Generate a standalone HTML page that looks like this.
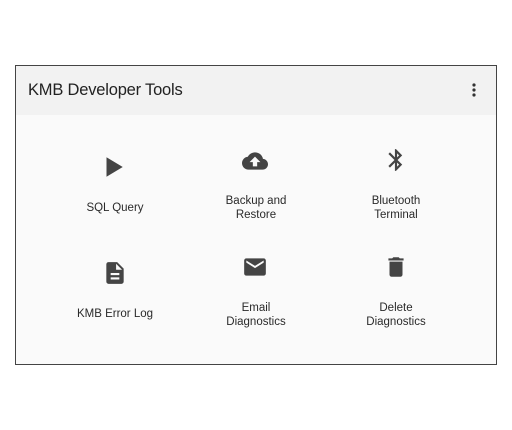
<!DOCTYPE html>
<html><head><style>
body{margin:0;background:#fff;width:512px;height:430px;position:relative;font-family:"Liberation Sans",sans-serif;}
.frame{position:absolute;left:15px;top:65px;width:480px;height:298px;border:1px solid #444;background:#fafafa;}
.hdr{position:absolute;left:0;top:0;width:480px;height:49px;background:#f2f2f2;}
.title{position:absolute;left:12px;top:15px;font-size:16.5px;color:#222;letter-spacing:-0.2px;}
.dots{position:absolute;left:455px;top:17px;}
.ic{position:absolute;width:26px;height:26px;}
.ic svg{width:26px;height:26px;fill:#444;}
.lb{position:absolute;width:120px;text-align:center;font-size:11.5px;line-height:14px;color:#2a2a2a;}
</style></head><body>
<div class="frame">
<div class="hdr"><div class="title">KMB Developer Tools</div>
<svg class="dots" width="6" height="14" viewBox="0 0 6 14"><circle cx="3" cy="2" r="1.6" fill="#333"/><circle cx="3" cy="7" r="1.6" fill="#333"/><circle cx="3" cy="12" r="1.6" fill="#333"/></svg></div>
</div>
<div class="ic" style="left:100px;top:154px"><svg viewBox="0 0 24 24"><path d="M6 3v18l15-9z"/></svg></div>
<div class="ic" style="left:242px;top:148px"><svg viewBox="0 0 24 24"><path d="M19.35 10.04A7.49 7.49 0 0 0 12 4C9.11 4 6.6 5.64 5.35 8.04A5.994 5.994 0 0 0 0 14c0 3.31 2.69 6 6 6h13c2.76 0 5-2.24 5-5 0-2.64-2.05-4.78-4.65-4.96zM14 13v4h-4v-4H7l5-5 5 5h-3z"/></svg></div>
<div class="ic" style="left:383px;top:147px"><svg viewBox="0 0 24 24"><path d="M17.71 7.71L12 2h-1v7.59L6.41 5 5 6.41 10.59 12 5 17.59 6.41 19 11 14.41V22h1l5.71-5.71-4.3-4.29 4.3-4.29zM13 5.83l1.88 1.88L13 9.59V5.83zm1.88 10.46L13 18.17v-3.76l1.88 1.88z"/></svg></div>
<div class="ic" style="left:102px;top:260px"><svg viewBox="0 0 24 24"><path d="M14 2H6c-1.1 0-2 .9-2 2v16c0 1.1.9 2 2 2h12c1.1 0 2-.9 2-2V8l-6-6zm2 16H8v-2h8v2zm0-4H8v-2h8v2zm-3-5V3.5L18.5 9H13z"/></svg></div>
<div class="ic" style="left:242px;top:254px"><svg viewBox="0 0 24 24"><path d="M20 4H4c-1.1 0-2 .9-2 2v12c0 1.1.9 2 2 2h16c1.1 0 2-.9 2-2V6c0-1.1-.9-2-2-2zm0 4l-8 5-8-5V6l8 5 8-5v2z"/></svg></div>
<div class="ic" style="left:383px;top:254px"><svg viewBox="0 0 24 24"><path d="M6 19c0 1.1.9 2 2 2h8c1.1 0 2-.9 2-2V7H6v12zM19 4h-3.5l-1-1h-5l-1 1H5v2h14V4z"/></svg></div>
<div class="lb" style="left:55px;top:201px">SQL Query</div>
<div class="lb" style="left:196px;top:194px">Backup and<br>Restore</div>
<div class="lb" style="left:336px;top:194px">Bluetooth<br>Terminal</div>
<div class="lb" style="left:55px;top:307px">KMB Error Log</div>
<div class="lb" style="left:196px;top:301px">Email<br>Diagnostics</div>
<div class="lb" style="left:336px;top:301px">Delete<br>Diagnostics</div>
</body></html>
